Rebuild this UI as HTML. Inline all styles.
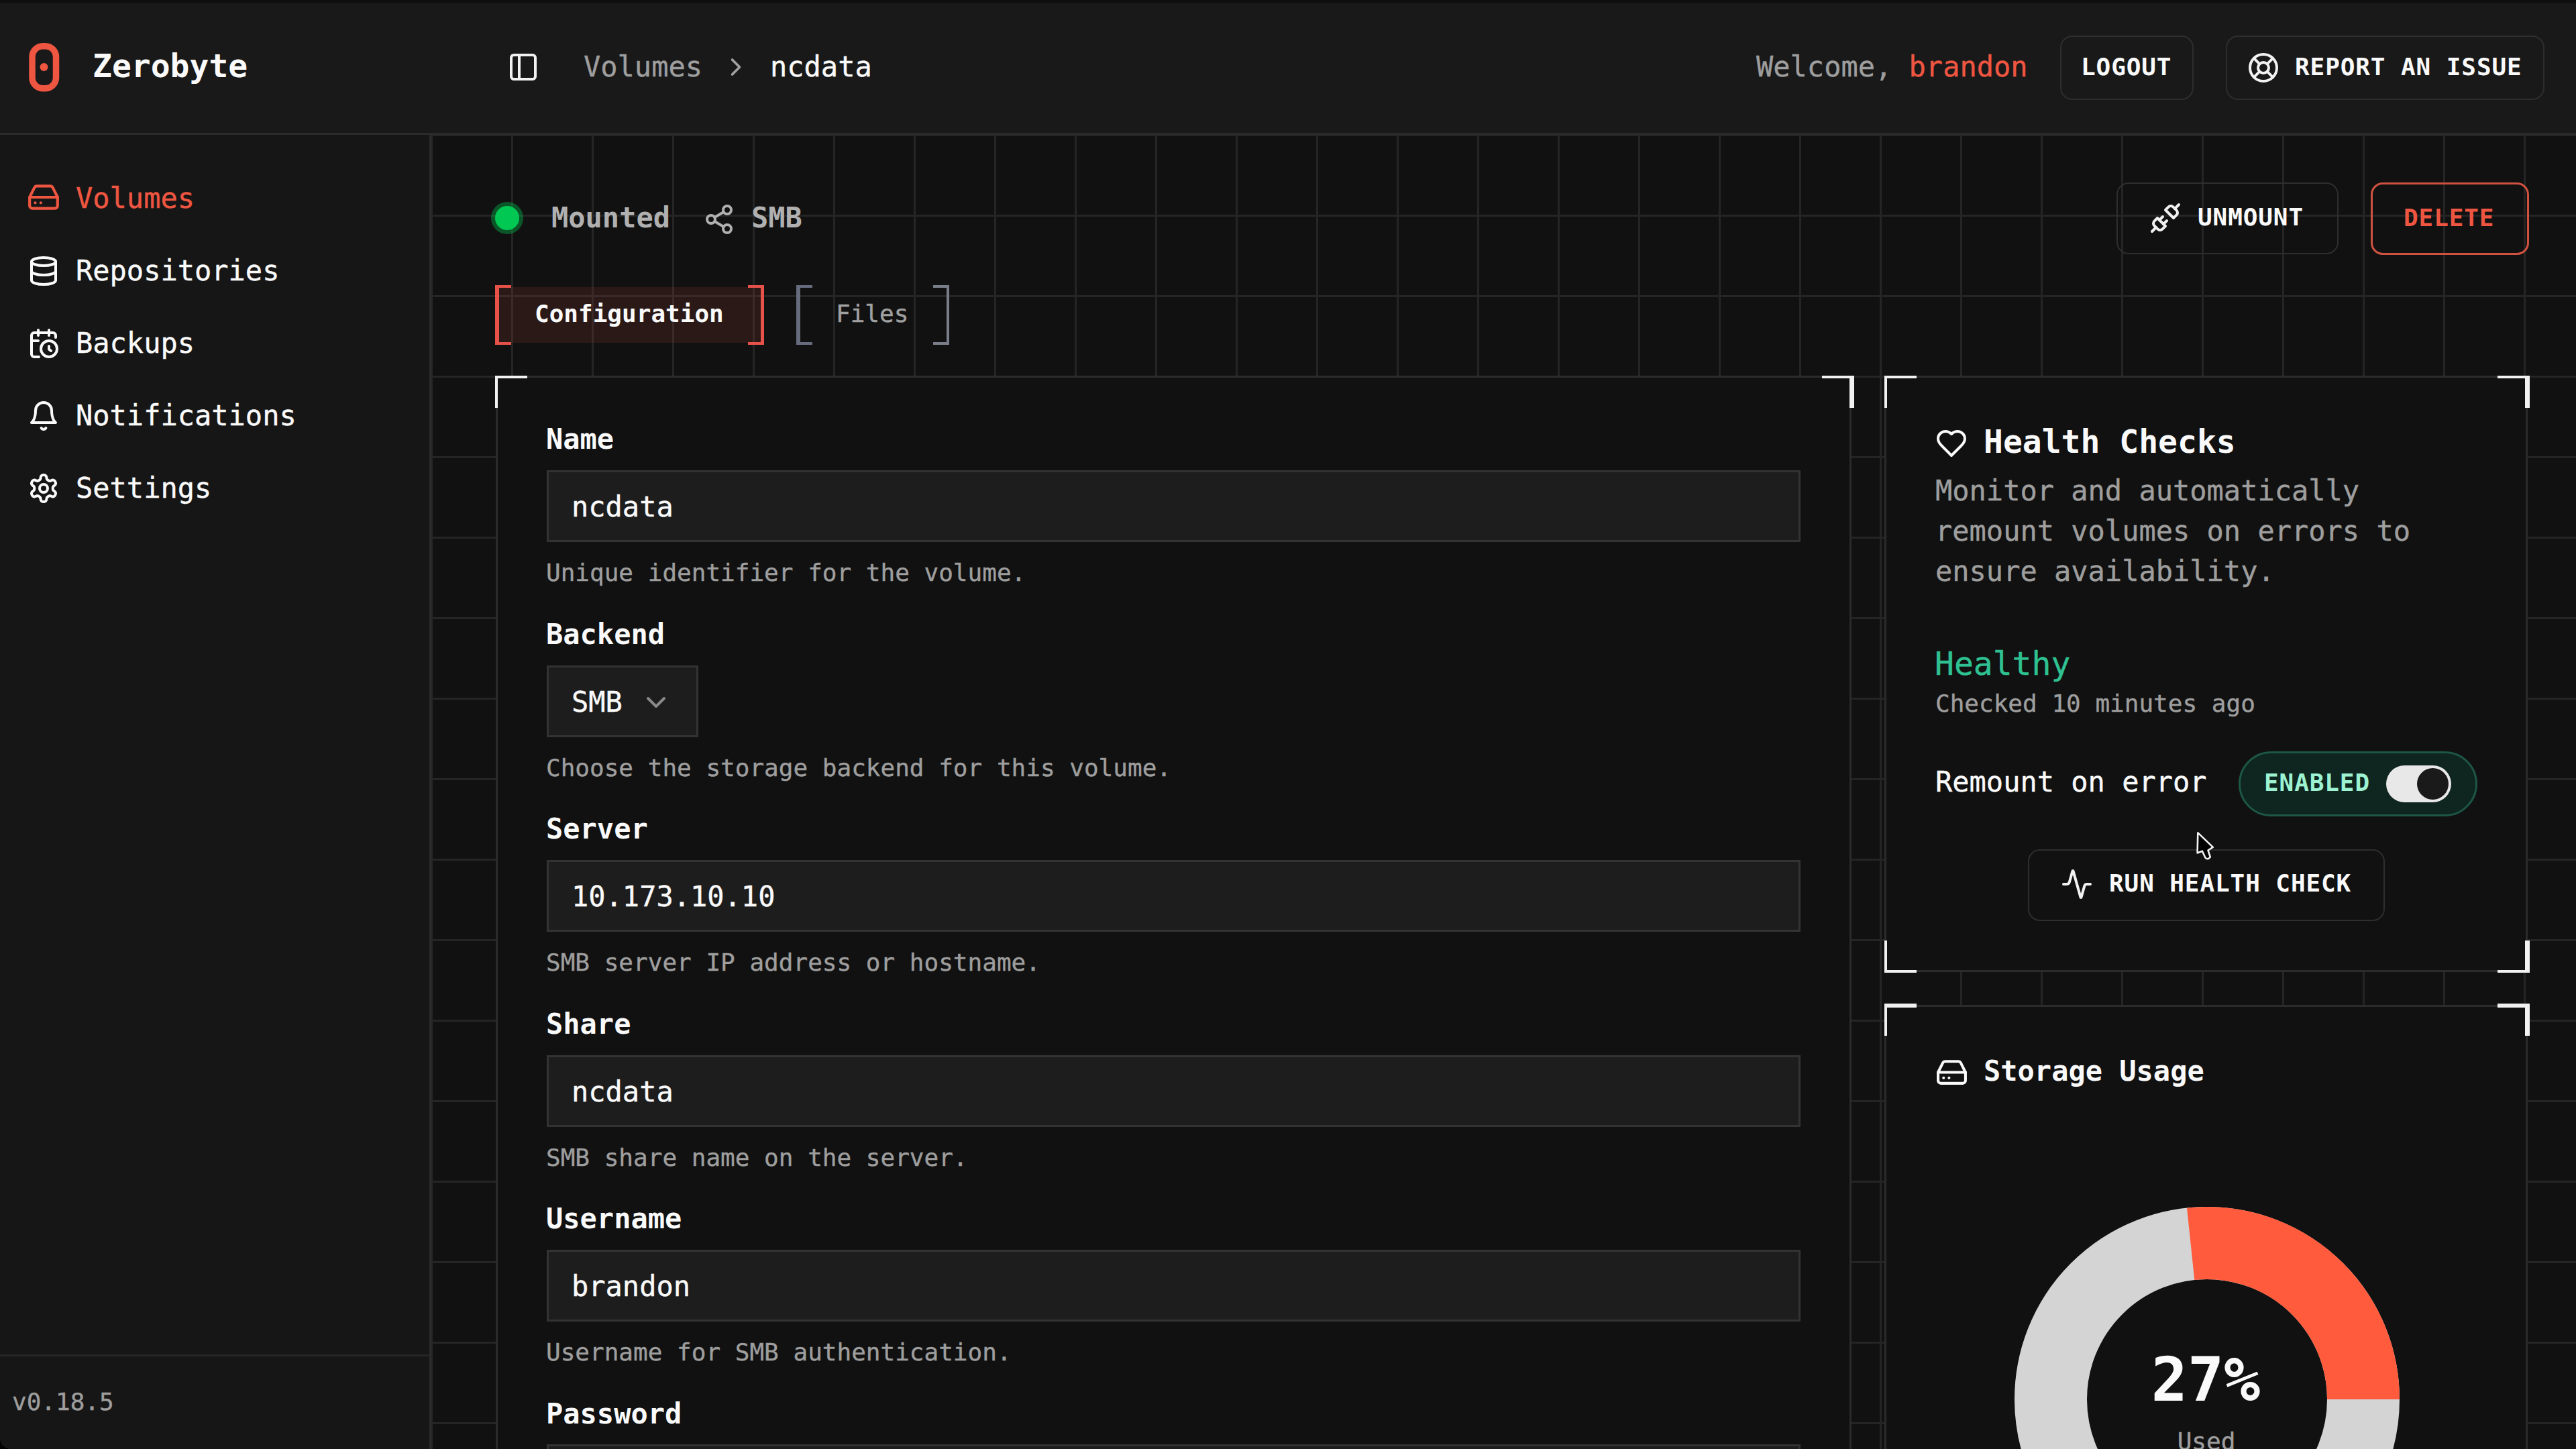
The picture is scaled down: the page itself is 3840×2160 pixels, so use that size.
<!DOCTYPE html>
<html lang="en">
<head>
<meta charset="utf-8">
<title>Zerobyte - ncdata</title>
<style>
*{box-sizing:border-box;margin:0;padding:0}
html,body{width:3840px;height:2160px;overflow:hidden;background:#101010}
body{position:relative;font-family:"DejaVu Sans Mono","Liberation Mono",monospace;color:#fafafa;font-size:42px;line-height:1}
.abs{position:absolute}
.t{position:absolute;white-space:nowrap;line-height:1;-webkit-text-stroke:.4px currentColor}
.b{font-weight:700;-webkit-text-stroke:0}
.muted{color:#9e9e9e}
svg.ic{position:absolute;fill:none;stroke:currentColor;stroke-width:2;stroke-linecap:round;stroke-linejoin:round}
#main{left:643px;top:201px;width:3197px;height:1959px;background-color:#111111;
background-image:linear-gradient(to right,#252525 3px,transparent 3px),linear-gradient(to bottom,#252525 3px,transparent 3px);
background-size:120px 120px;background-position:119px 119px}
#header{left:0;top:0;width:3840px;height:201px;background:#191919;border-bottom:3px solid #2b2b2b}
#topstrip{left:0;top:0;width:3840px;height:6px;background:linear-gradient(to bottom,#0d0d0d 0,#0e0e0e 3px,#191919 6px)}
#sidebar{left:0;top:201px;width:643px;height:1959px;background:#161616;border-right:3px solid #2b2b2b}
#sfoot{left:0;top:2019px;width:640px;height:141px;border-top:3px solid #262626}
.card{position:absolute;background:#111111;border:3px solid #2b2b2b}
.btn{position:absolute;border:2px solid #2e2e2e;border-radius:18px}
.bt{font-size:36px;font-weight:700;letter-spacing:.9px;-webkit-text-stroke:0}
.lbl{font-size:42px;font-weight:700;-webkit-text-stroke:0}
.inp{position:absolute;background:#1d1d1d;border:3px solid #333333}
.desc{font-size:36px;color:#9e9e9e}
.nav{font-size:42px}
</style>
</head>
<body>
<div class="abs" id="main"></div>
<div class="abs" id="header"></div>
<div class="abs" id="topstrip"></div>
<div class="abs" id="sidebar"></div>
<div class="abs" id="sfoot"></div>

<svg class="abs" style="left:38px;top:60px" width="56" height="80" viewBox="0 0 56 80"><rect x="10" y="8.75" width="35.5" height="63" rx="16" fill="none" stroke="#ef5641" stroke-width="9.5"/><circle cx="27.5" cy="40" r="6" fill="#ef5641"/></svg>
<div class="t b" style="left:138px;top:74px;font-size:48px">Zerobyte</div>
<svg class="ic" style="left:756px;top:76px;color:#f2f2f2" width="48" height="48" viewBox="0 0 24 24"><rect width="18" height="18" x="3" y="3" rx="2"/><path d="M9 3v18"/></svg>
<div class="t muted" style="left:870px;top:79px">Volumes</div>
<svg class="ic" style="left:1074.7px;top:78.3px;color:#a1a1a1" width="44" height="44" viewBox="0 0 24 24"><path d="m9 18 6-6-6-6"/></svg>
<div class="t" style="left:1148px;top:79px">ncdata</div>
<div class="t muted" style="left:2618px;top:79px">Welcome, <span style="color:#ef5641">brandon</span></div>
<div class="btn" style="left:3071px;top:53px;width:199px;height:96px"></div>
<div class="t bt" style="left:3102px;top:82px">LOGOUT</div>
<div class="btn" style="left:3318px;top:53px;width:475px;height:96px"></div>
<svg class="ic" style="left:3350px;top:77px;color:#f2f2f2" width="48" height="48" viewBox="0 0 24 24"><circle cx="12" cy="12" r="10"/><path d="m4.93 4.93 4.24 4.24"/><path d="m14.83 9.17 4.24-4.24"/><path d="m14.83 14.83 4.24 4.24"/><path d="m9.17 14.83-4.24 4.24"/><circle cx="12" cy="12" r="4"/></svg>
<div class="t bt" style="left:3421px;top:82px">REPORT AN ISSUE</div>


<svg class="ic" style="left:40px;top:269px;color:#ef5641" width="50" height="50" viewBox="0 0 24 24"><line x1="22" x2="2" y1="12" y2="12"/><path d="M5.45 5.11 2 12v6a2 2 0 0 0 2 2h16a2 2 0 0 0 2-2v-6l-3.45-6.89A2 2 0 0 0 16.76 4H7.24a2 2 0 0 0-1.79 1.11z"/><line x1="6" x2="6.01" y1="16" y2="16"/><line x1="10" x2="10.01" y1="16" y2="16"/></svg>
<div class="t nav" style="left:113px;top:275px;color:#ef5641">Volumes</div>
<svg class="ic" style="left:41px;top:380px" width="48" height="48" viewBox="0 0 24 24"><ellipse cx="12" cy="5" rx="9" ry="3"/><path d="M3 5V19A9 3 0 0 0 21 19V5"/><path d="M3 12A9 3 0 0 0 21 12"/></svg>
<div class="t nav" style="left:113px;top:383px">Repositories</div>
<svg class="ic" style="left:41px;top:488px" width="48" height="48" viewBox="0 0 24 24"><path d="M21 7.5V6a2 2 0 0 0-2-2H5a2 2 0 0 0-2 2v14a2 2 0 0 0 2 2h3.5"/><path d="M16 2v4"/><path d="M8 2v4"/><path d="M3 10h5"/><path d="M17.5 17.5 16 16.3V14"/><circle cx="16" cy="16" r="6"/></svg>
<div class="t nav" style="left:113px;top:491px">Backups</div>
<svg class="ic" style="left:41px;top:596px" width="48" height="48" viewBox="0 0 24 24"><path d="M6 8a6 6 0 0 1 12 0c0 7 3 9 3 9H3s3-2 3-9"/><path d="M10.3 21a1.94 1.94 0 0 0 3.4 0"/></svg>
<div class="t nav" style="left:113px;top:599px">Notifications</div>
<svg class="ic" style="left:41px;top:704px" width="48" height="48" viewBox="0 0 24 24"><path d="M12.22 2h-.44a2 2 0 0 0-2 2v.18a2 2 0 0 1-1 1.73l-.43.25a2 2 0 0 1-2 0l-.15-.08a2 2 0 0 0-2.73.73l-.22.38a2 2 0 0 0 .73 2.73l.15.1a2 2 0 0 1 1 1.72v.51a2 2 0 0 1-1 1.74l-.15.09a2 2 0 0 0-.73 2.73l.22.38a2 2 0 0 0 2.73.73l.15-.08a2 2 0 0 1 2 0l.43.25a2 2 0 0 1 1 1.73V20a2 2 0 0 0 2 2h.44a2 2 0 0 0 2-2v-.18a2 2 0 0 1 1-1.73l.43-.25a2 2 0 0 1 2 0l.15.08a2 2 0 0 0 2.73-.73l.22-.39a2 2 0 0 0-.73-2.73l-.15-.08a2 2 0 0 1-1-1.74v-.5a2 2 0 0 1 1-1.74l.15-.09a2 2 0 0 0 .73-2.73l-.22-.38a2 2 0 0 0-2.73-.73l-.15.08a2 2 0 0 1-2 0l-.43-.25a2 2 0 0 1-1-1.73V4a2 2 0 0 0-2-2z"/><circle cx="12" cy="12" r="3"/></svg>
<div class="t nav" style="left:113px;top:707px">Settings</div>
<div class="t muted" style="left:18px;top:2072px;font-size:36px">v0.18.5</div>


<div class="abs" style="left:732px;top:301px;width:48px;height:48px;border-radius:50%;background:rgba(0,201,80,.38)"></div>
<div class="abs" style="left:738px;top:307px;width:36px;height:36px;border-radius:50%;background:#00c853"></div>
<div class="t b" style="left:822px;top:304px;color:#b0b0b0">Mounted</div>
<svg class="ic" style="left:1048px;top:303px;color:#b0b0b0" width="48" height="48" viewBox="0 0 24 24"><circle cx="18" cy="5" r="3"/><circle cx="6" cy="12" r="3"/><circle cx="18" cy="19" r="3"/><line x1="8.59" x2="15.42" y1="13.51" y2="17.49"/><line x1="15.41" x2="8.59" y1="6.51" y2="10.49"/></svg>
<div class="t b" style="left:1120px;top:304px;color:#b0b0b0">SMB</div>
<div class="btn" style="left:3155px;top:272px;width:331px;height:107px"></div>
<svg class="ic" style="left:3204px;top:301px;color:#f2f2f2" width="48" height="48" viewBox="0 0 24 24"><path d="m19 5 3-3"/><path d="m2 22 3-3"/><path d="M6.3 20.3a2.4 2.4 0 0 0 3.4 0L12 18l-6-6-2.3 2.3a2.4 2.4 0 0 0 0 3.4Z"/><path d="M7.5 13.5 10 11"/><path d="M10.5 16.5 13 14"/><path d="m12 6 6 6 2.3-2.3a2.4 2.4 0 0 0 0-3.4l-2.6-2.6a2.4 2.4 0 0 0-3.4 0Z"/></svg>
<div class="t bt" style="left:3276px;top:306px">UNMOUNT</div>
<div class="btn" style="left:3534px;top:272px;width:236px;height:108px;border:3px solid #cf5240"></div>
<div class="t bt" style="left:3583px;top:307px;color:#ef5641">DELETE</div>

<div class="abs" style="left:738px;top:428px;width:401px;height:83px;background:rgba(239,86,65,.115)"></div>
<div class="abs" style="left:738px;top:425px;width:24px;height:89px;border:4px solid #e6524a;border-left-width:6px;border-right:0"></div>
<div class="abs" style="left:1115px;top:425px;width:24px;height:89px;border:4px solid #e6524a;border-right-width:5px;border-left:0"></div>
<div class="t b" style="left:797px;top:450px;font-size:36px">Configuration</div>
<div class="abs" style="left:1187px;top:425px;width:24px;height:89px;border:4px solid #666c7e;border-left-width:6px;border-right:0"></div>
<div class="abs" style="left:1391px;top:425px;width:24px;height:89px;border:4px solid #7a7e8a;border-right-width:4px;border-left:0"></div>
<div class="t" style="left:1246px;top:450px;font-size:36px;color:#a1a1a1">Files</div>

<div class="card" style="left:739px;top:560px;width:2021px;height:1700px"></div>
<div class="abs" style="left:738px;top:560px;width:48px;height:4px;background:#f2f2f2"></div><div class="abs" style="left:738px;top:560px;width:4px;height:48px;background:#f2f2f2"></div>
<div class="abs" style="left:2716px;top:560px;width:48px;height:4px;background:#f2f2f2"></div><div class="abs" style="left:2757px;top:560px;width:7px;height:48px;background:#f2f2f2"></div>

<div class="t lbl" style="left:814px;top:634px">Name</div>
<div class="inp" style="left:815px;top:701px;width:1869px;height:107px"></div>
<div class="t" style="left:852px;top:735px">ncdata</div>
<div class="t desc" style="left:814px;top:836px">Unique identifier for the volume.</div>
<div class="t lbl" style="left:814px;top:925px">Backend</div>
<div class="inp" style="left:815px;top:992px;width:226px;height:107px"></div>
<div class="t" style="left:852px;top:1026px">SMB</div>
<svg class="ic" style="left:954px;top:1023px;color:#8a8a8a" width="48" height="48" viewBox="0 0 24 24"><path d="m6 9 6 6 6-6"/></svg>
<div class="t desc" style="left:814px;top:1127px">Choose the storage backend for this volume.</div>
<div class="t lbl" style="left:814px;top:1215px">Server</div>
<div class="inp" style="left:815px;top:1282px;width:1869px;height:107px"></div>
<div class="t" style="left:852px;top:1316px">10.173.10.10</div>
<div class="t desc" style="left:814px;top:1417px">SMB server IP address or hostname.</div>
<div class="t lbl" style="left:814px;top:1506px">Share</div>
<div class="inp" style="left:815px;top:1573px;width:1869px;height:107px"></div>
<div class="t" style="left:852px;top:1607px">ncdata</div>
<div class="t desc" style="left:814px;top:1708px">SMB share name on the server.</div>
<div class="t lbl" style="left:814px;top:1796px">Username</div>
<div class="inp" style="left:815px;top:1863px;width:1869px;height:107px"></div>
<div class="t" style="left:852px;top:1897px">brandon</div>
<div class="t desc" style="left:814px;top:1998px">Username for SMB authentication.</div>
<div class="t lbl" style="left:814px;top:2087px">Password</div>
<div class="inp" style="left:815px;top:2153px;width:1869px;height:107px"></div>

<div class="card" style="left:2809px;top:560px;width:959px;height:889px"></div>
<div class="abs" style="left:2809px;top:560px;width:48px;height:4px;background:#f2f2f2"></div><div class="abs" style="left:2809px;top:560px;width:4px;height:48px;background:#f2f2f2"></div>
<div class="abs" style="left:3723px;top:560px;width:48px;height:4px;background:#f2f2f2"></div><div class="abs" style="left:3764px;top:560px;width:7px;height:48px;background:#f2f2f2"></div>
<div class="abs" style="left:2809px;top:1446px;width:48px;height:4px;background:#f2f2f2"></div><div class="abs" style="left:2809px;top:1402px;width:4px;height:48px;background:#f2f2f2"></div>
<div class="abs" style="left:3723px;top:1446px;width:48px;height:4px;background:#f2f2f2"></div><div class="abs" style="left:3764px;top:1402px;width:7px;height:48px;background:#f2f2f2"></div>

<svg class="ic" style="left:2885px;top:637px" width="48" height="48" viewBox="0 0 24 24"><path d="M19 14c1.49-1.46 3-3.21 3-5.5A5.5 5.5 0 0 0 16.5 3c-1.76 0-3 .5-4.5 2-1.5-1.5-2.74-2-4.5-2A5.5 5.5 0 0 0 2 8.5c0 2.3 1.5 4.05 3 5.5l7 7Z"/></svg>
<div class="t b" style="left:2957px;top:634px;font-size:48px">Health Checks</div>
<div class="t muted" style="left:2885px;top:702px;line-height:60px;white-space:pre">Monitor and automatically
remount volumes on errors to
ensure availability.</div>
<div class="t" style="left:2884px;top:965px;font-size:48px;color:#2fc191">Healthy</div>
<div class="t muted" style="left:2885px;top:1031px;font-size:36px">Checked 10 minutes ago</div>
<div class="t" style="left:2885px;top:1145px">Remount on error</div>
<div class="abs" style="left:3337px;top:1120px;width:356px;height:97px;border-radius:49px;background:#0f251f;border:3px solid #1d5746"></div>
<div class="t bt" style="left:3375px;top:1149px;color:#9df3d1">ENABLED</div>
<div class="abs" style="left:3557px;top:1141px;width:97px;height:55px;border-radius:28px;background:#e8e8e8"></div>
<div class="abs" style="left:3603px;top:1145px;width:47px;height:47px;border-radius:50%;background:#1a1a1a"></div>
<div class="btn" style="left:3023px;top:1266px;width:532px;height:107px"></div>
<svg class="ic" style="left:3072px;top:1294px;color:#f2f2f2" width="48" height="48" viewBox="0 0 24 24"><path d="M22 12h-2.48a2 2 0 0 0-1.93 1.46l-2.35 8.36a.25.25 0 0 1-.48 0L9.24 2.18a.25.25 0 0 0-.48 0l-2.35 8.36A2 2 0 0 1 4.49 12H2"/></svg>
<div class="t bt" style="left:3144px;top:1299px;letter-spacing:.9px">RUN HEALTH CHECK</div>
<svg class="abs" style="left:3271px;top:1238px" width="36" height="50" viewBox="0 0 36 50"><path d="M5.3 3.4 L4.6 33.5 L11.9 30.7 L16.4 40.5 Q20 44.5 23.8 39.5 L20.5 29.5 L27.8 24.9 Z" fill="#000" stroke="#f2f2f2" stroke-width="2.6" stroke-linejoin="round"/></svg>

<div class="card" style="left:2809px;top:1498px;width:959px;height:800px"></div>
<div class="abs" style="left:2809px;top:1496px;width:48px;height:6px;background:#f2f2f2"></div><div class="abs" style="left:2809px;top:1496px;width:4px;height:48px;background:#f2f2f2"></div>
<div class="abs" style="left:3723px;top:1496px;width:48px;height:6px;background:#f2f2f2"></div><div class="abs" style="left:3764px;top:1496px;width:7px;height:48px;background:#f2f2f2"></div>

<svg class="ic" style="left:2885px;top:1574px" width="49" height="49" viewBox="0 0 24 24"><line x1="22" x2="2" y1="12" y2="12"/><path d="M5.45 5.11 2 12v6a2 2 0 0 0 2 2h16a2 2 0 0 0 2-2v-6l-3.45-6.89A2 2 0 0 0 16.76 4H7.24a2 2 0 0 0-1.79 1.11z"/><line x1="6" x2="6.01" y1="16" y2="16"/><line x1="10" x2="10.01" y1="16" y2="16"/></svg>
<div class="t b" style="left:2957px;top:1576px">Storage Usage</div>
<svg class="abs" style="left:2990px;top:1786px" width="600" height="374" viewBox="-300 -300 600 374"><circle r="233" fill="none" stroke="#d4d4d4" stroke-width="108"/><path d="M 287 0 A 287 287 0 0 0 -30 -285.43 L -18.71 -178.02 A 179 179 0 0 1 179 0 Z" fill="#ff5b3c"/></svg>
<div class="t b" style="left:3188px;top:2012px;width:200px;text-align:center;font-size:90px">27%</div>
<div class="t muted" style="left:3189px;top:2131px;width:200px;text-align:center;font-size:36px">Used</div>
<svg class="abs" style="left:0;top:2144px" width="16" height="16" viewBox="0 0 16 16"><path d="M0 0 A 16 16 0 0 0 16 16 L0 16 Z" fill="#030303"/></svg>

<script>(function(){var w=window.innerWidth;if(w&&Math.abs(w-3840)>1){var b=document.body;b.style.transformOrigin="0 0";b.style.transform="scale("+(w/3840)+")";}})();</script>
</body>
</html>
